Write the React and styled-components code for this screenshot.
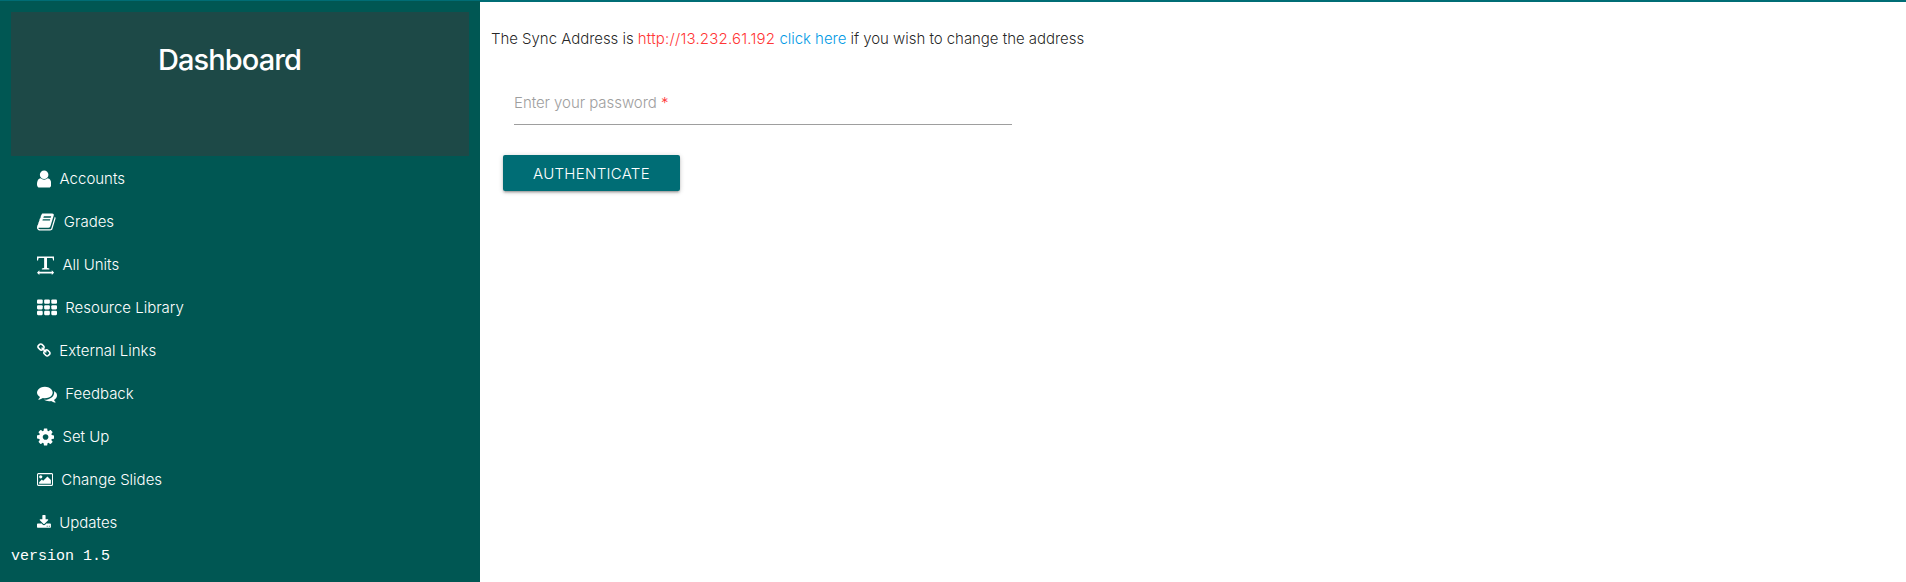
import React from "react";
import styled, { createGlobalStyle } from "styled-components";

const Global = createGlobalStyle`
  * { box-sizing: border-box; }
  body {
    margin: 0;
    background: #fff;
    font-family: Inter, "Liberation Sans", sans-serif;
    font-size: 15px;
    font-weight: 300;
    color: rgba(0, 0, 0, 0.87);
  }
`;

const Page = styled.div`
  display: flex;
  height: 582px;
  overflow: hidden;
  background: linear-gradient(#006d75 2px, #fff 2px);
`;

const Sidebar = styled.aside`
  display: flex;
  flex-direction: column;
  width: 480px;
  margin-top: 1px;
  padding: 10.5px 11px 0;
  background: #005753;
  color: #fff;
`;

const Banner = styled.header`
  flex: none;
  height: 144px;
  padding: 26px 100px 0 79px;
  background: #1d4947;
  text-align: center;
`;

const Title = styled.h1`
  margin: 0;
  font-size: 29px;
  line-height: 44px;
  font-weight: 500;
  letter-spacing: -0.9px;
`;

const Menu = styled.nav`
  display: flex;
  flex-direction: column;
  padding: 1px 26px 0;
`;

const MenuItem = styled.a`
  display: flex;
  align-items: center;
  gap: 8.3px;
  height: 43px;
  color: #fff;
  letter-spacing: 0;
  white-space: nowrap;
`;

const Glyph = styled.svg`
  flex: none;
  display: block;
  height: ${(p) => p.$size}px;
  width: ${(p) => (p.$advance * p.$size) / 1792}px;
  margin-top: 1px;
  fill: currentColor;
`;

const Version = styled.div`
  margin-top: 4px;
  font-family: "Liberation Mono", monospace;
  font-size: 15px;
  font-weight: 400;
  line-height: 18px;
`;

const Main = styled.main`
  flex: 1;
  padding: 27px 11px 0;
`;

const Notice = styled.p`
  margin: 0;
  height: 24px;
  line-height: 24px;
  letter-spacing: -0.04px;
  white-space: nowrap;
`;

const Address = styled.span`
  color: #ff3636;
  letter-spacing: 0.2px;
`;

const Link = styled.a`
  color: #039be5;
`;

const Field = styled.label`
  display: block;
  width: 498px;
  height: 46px;
  margin: 28px 0 0 23px;
  padding-top: 12px;
  border-bottom: 1px solid #9e9e9e;
  color: #9e9e9e;
  line-height: 24px;
  letter-spacing: -0.05px;
`;

const Required = styled.span`
  color: #ff3636;
`;

const Button = styled.button`
  display: flex;
  align-items: center;
  justify-content: center;
  width: 177px;
  height: 36px;
  margin: 30px 0 0 12px;
  padding: 0;
  border: 0;
  border-radius: 2px;
  background: #006d75;
  box-shadow: 0 2px 2px 0 rgba(0, 0, 0, 0.14), 0 3px 1px -2px rgba(0, 0, 0, 0.12),
    0 1px 5px 0 rgba(0, 0, 0, 0.2);
  color: #fff;
  font: inherit;
  letter-spacing: 0.3px;
`;

const cells = [0, 640, 1280].flatMap((x) => [256, 768, 1280].map((y) => [x, y]));

const items = [
  {
    label: "Accounts", size: 20, advance: 1280,
    art: <path d="M1536 1399q0 109-62.5 187t-150.5 78h-854q-88 0-150.5-78t-62.5-187q0-85 8.5-160.5t31.5-152 58.5-131 94-89 134.5-34.5q131 128 313 128t313-128q76 0 134.5 34.5t94 89 58.5 131 31.5 152 8.5 160.5zm-256-887q0 159-112.5 271.5t-271.5 112.5-271.5-112.5-112.5-271.5 112.5-271.5 271.5-112.5 271.5 112.5 112.5 271.5z" />,
  },
  {
    label: "Grades", size: 20, advance: 1664,
    art: <path d="M1703 478q40 57 18 129l-275 906q-19 64-76.5 107.5t-122.5 43.5h-923q-77 0-148.5-53.5t-99.5-131.5q-24-67-2-127 0-4 3-27t4-37q1-8-3-21.5t-3-19.5q2-11 8-21t16.5-23.5 16.5-23.5q23-38 45-91.5t30-91.5q3-10 .5-30t-.5-28q3-11 17-28t17-23q21-36 42-92t25-90q1-9-2.5-32t.5-28q4-13 22-30.5t22-22.5q19-26 42.5-84.5t27.5-96.5q1-8-3-25.5t-2-26.5q2-8 9-18t18-23 17-21q8-12 16.5-30.5t15-35 16-36 19.5-32 26.5-23.5 36-11.5 47.5 5.5l-1 3q38-9 51-9h761q74 0 114 56t18 130l-274 906q-36 119-71.5 153.5t-128.5 34.5h-869q-27 0-38 15-11 16-1 43 24 70 144 70h923q29 0 56-15.5t35-41.5l300-987q7-22 5-57 38 15 59 43zm-1064 2q-4 13 2 22.5t20 9.5h608q13 0 25.5-9.5t16.5-22.5l21-64q4-13-2-22.5t-20-9.5h-608q-13 0-25.5 9.5t-16.5 22.5zm-83 256q-4 13 2 22.5t20 9.5h608q13 0 25.5-9.5t16.5-22.5l21-64q4-13-2-22.5t-20-9.5h-608q-13 0-25.5 9.5t-16.5 22.5z" />,
  },
  {
    label: "All Units", size: 20, advance: 1536,
    art: (
      <path d="M128 128H1664V500H1570Q1550 300 1500 275Q1470 260 1300 260H1025V1090Q1025 1160 1060 1175L1230 1205V1305H562V1205L732 1175Q767 1160 767 1090V260H492Q322 260 292 275Q242 300 222 500H128ZM128 1580L340 1370V1495H1452V1370L1664 1580L1452 1790V1665H340V1790Z" />
    ),
  },
  {
    label: "Resource Library", size: 20, advance: 1792,
    art: cells.map(([x, y]) => <rect key={`${x}-${y}`} x={x} y={y - 128} width="512" height="384" rx="96" />),
  },
  {
    label: "External Links", size: 15, advance: 1664,
    art: <path d="M1520 1216q0-40-28-68l-208-208q-28-28-68-28-42 0-72 32 3 3 19 18.5t21.5 21.5 15 19 13 25.5 3.5 27.5q0 40-28 68t-68 28q-15 0-27.5-3.5t-25.5-13-19-15-21.5-21.5-18.5-19q-33 31-33 73 0 40 28 68l206 207q27 27 68 27 40 0 68-26l147-146q28-28 28-67zm-703-705q0-40-28-68l-206-207q-28-28-68-28-39 0-68 27l-147 146q-28 28-28 67 0 40 28 68l208 208q27 27 68 27 42 0 72-31-3-3-19-18.5t-21.5-21.5-15-19-13-25.5-3.5-27.5q0-40 28-68t68-28q15 0 27.5 3.5t25.5 13 19 15 21.5 21.5 18.5 19q33-31 33-73zm895 705q0 120-85 203l-147 146q-83 83-203 83-121 0-204-85l-206-207q-83-83-83-203 0-123 88-209l-88-88q-86 88-208 88-120 0-204-84l-208-208q-84-84-84-204t85-203l147-146q83-83 203-83 121 0 204 85l206 207q83 83 83 203 0 123-88 209l88 88q86-88 208-88 120 0 204 84l208 208q84 84 84 204z" />,
  },
  {
    label: "Feedback", size: 20, advance: 1792,
    art: <path d="M1408 768q0 139-94 257t-256.5 186.5-353.5 68.5q-86 0-176-16-124 88-278 128-36 9-86 16h-3q-11 0-20.5-8t-11.5-21q-1-3-1-6.5t.5-6.5 2-6l2.5-5 3.5-5.5 4-5 4.5-5 4-4.5q5-6 23-25t26-29.5 22.5-29 25-38.5 20.5-44q-124-72-195-177t-71-224q0-139 94-257t256.5-186.5 353.5-68.5 353.5 68.5 256.5 186.5 94 257zm384 256q0 120-71 224.5t-195 176.5q10 24 20.5 44t25 38.5 22.5 29 26 29.5 23 25q1 1 4 4.5t4.5 5 4 5 3.5 5.5l2.5 5 2 6 .5 6.5-1 6.5q-3 14-13 22t-22 7q-50-7-86-16-154-40-278-128-90 16-176 16-271 0-472-132 58 4 88 4 161 0 309-45t264-129q125-92 192-212t67-254q0-77-23-152 129 71 204 178t75 230z" />,
  },
  {
    label: "Set Up", size: 20, advance: 1536,
    art: <path d="M1152 896q0-106-75-181t-181-75-181 75-75 181 75 181 181 75 181-75 75-181zm512-109v222q0 12-8 23t-20 13l-185 28q-19 54-39 91 35 50 107 138 10 12 10 25t-9 23q-27 37-99 108t-94 71q-12 0-26-9l-138-108q-44 23-91 38-16 136-29 186-7 28-36 28h-222q-14 0-24.5-8.5t-11.5-21.5l-28-184q-49-16-90-37l-141 107q-10 9-25 9-14 0-25-11-126-114-165-168-7-10-7-23 0-12 8-23 15-21 51-66.5t54-70.5q-27-50-41-99l-183-27q-13-2-21-12.5t-8-23.5v-222q0-12 8-23t19-13l186-28q14-46 39-92-40-57-107-138-10-12-10-24 0-10 9-23 26-36 98.5-107.5t94.5-71.5q13 0 26 10l138 107q44-23 91-38 16-136 29-186 7-28 36-28h222q14 0 24.5 8.5t11.5 21.5l28 184q49 16 90 37l142-107q9-9 24-9 13 0 25 10 129 119 165 170 7 8 7 22 0 12-8 23-15 21-51 66.5t-54 70.5q26 50 41 98l183 28q13 2 21 12.5t8 23.5z" />,
  },
  {
    label: "Change Slides", size: 15, advance: 1920,
    art: <path d="M576 576q0 80-56 136t-136 56-136-56-56-136 56-136 136-56 136 56 56 136zm1024 384v448h-1408v-192l320-320 160 160 512-512zm96-704h-1600q-13 0-22.5 9.5t-9.5 22.5v1216q0 13 9.5 22.5t22.5 9.5h1600q13 0 22.5-9.5t9.5-22.5v-1216q0-13-9.5-22.5t-22.5-9.5zm160 32v1216q0 66-47 113t-113 47h-1600q-66 0-113-47t-47-113v-1216q0-66 47-113t113-47h1600q66 0 113 47t47 113z" />,
  },
  {
    label: "Updates", size: 15, advance: 1664,
    art: <path d="M1344 1344q0-26-19-45t-45-19-45 19-19 45 19 45 45 19 45-19 19-45zm256 0q0-26-19-45t-45-19-45 19-19 45 19 45 45 19 45-19 19-45zm128-224v320q0 40-28 68t-68 28h-1472q-40 0-68-28t-28-68v-320q0-40 28-68t68-28h465l135 136q58 56 136 56t136-56l136-136h464q40 0 68 28t28 68zm-325-569q17 41-14 70l-448 448q-18 19-45 19t-45-19l-448-448q-31-29-14-70 17-39 59-39h256v-448q0-26 19-45t45-19h256q26 0 45 19t19 45v448h256q42 0 59 39z" />,
  },
];

function Icon({ size, advance, children }) {
  return (
    <Glyph
      $size={size}
      $advance={advance}
      viewBox={`${(1792 - advance) / 2} 0 ${advance} 1792`}
      aria-hidden="true"
    >
      {children}
    </Glyph>
  );
}

export default function App() {
  return (
    <>
      <Global />
      <Page>
        <Sidebar>
          <Banner>
            <Title>Dashboard</Title>
          </Banner>
          <Menu>
            {items.map(({ label, size, advance, art }) => (
              <MenuItem key={label}>
                <Icon size={size} advance={advance}>{art}</Icon>
                <span>{label}</span>
              </MenuItem>
            ))}
          </Menu>
          <Version>version 1.5</Version>
        </Sidebar>
        <Main>
          <Notice>
            The Sync Address is <Address>http://13.232.61.192</Address> <Link>click here</Link> if you
            wish to change the address
          </Notice>
          <Field>
            Enter your password <Required>*</Required>
          </Field>
          <Button type="button">AUTHENTICATE</Button>
        </Main>
      </Page>
    </>
  );
}
